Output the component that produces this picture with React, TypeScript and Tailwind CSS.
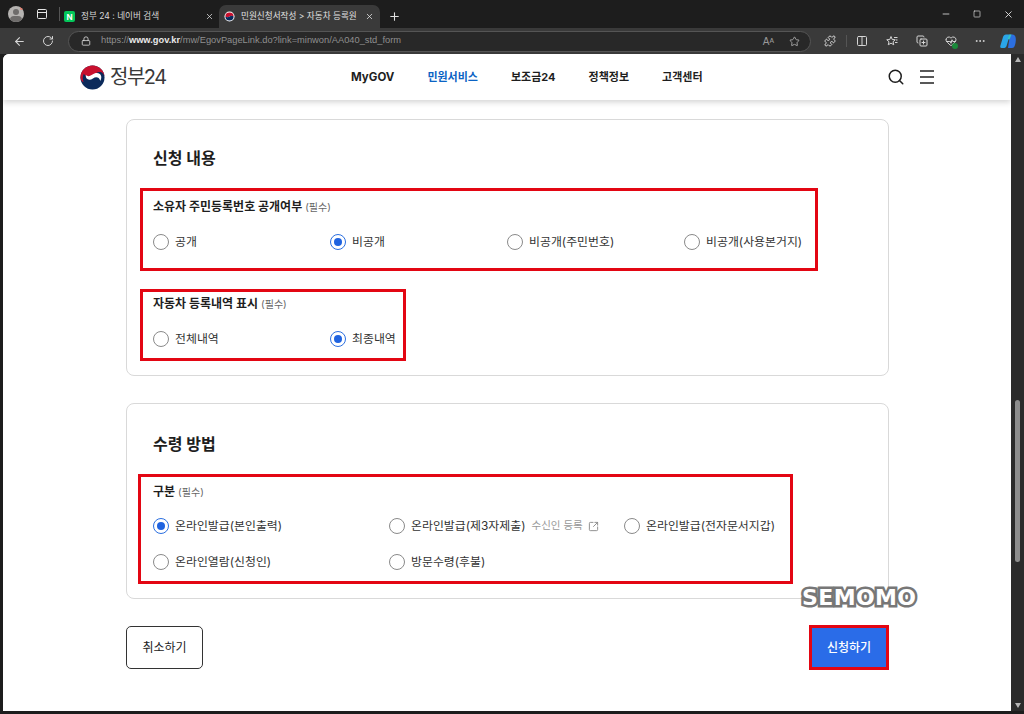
import React from "react";
import { ArrowLeft, RotateCw, Lock, Star, Search, X, Plus, Minus, Square, MoreHorizontal, Columns2, Puzzle, SquareArrowOutUpRight, HeartPulse, CopyPlus, PanelTop } from "lucide-react";

function Radio({ checked, label }: { checked?: boolean; label: string }) {
  return (
    <span className="flex items-center gap-[6px]">
      <span className={`flex h-[16px] w-[16px] shrink-0 items-center justify-center rounded-full border bg-white ${checked ? "border-[#2b6fe0]" : "border-[#8a8a8a]"}`}>
        {checked && <span className="h-[8px] w-[8px] rounded-full bg-[#1f63e0]" />}
      </span>
      <span className="whitespace-nowrap text-[11.9px] leading-[16px] text-[#333]">{label}</span>
    </span>
  );
}

function Head({ title }: { title: string }) {
  return (
    <div className="flex items-baseline gap-[3px] leading-[16px]">
      <span className="whitespace-nowrap text-[12px] font-bold text-[#1e1e1e]">{title}</span>
      <span className="text-[10px] text-[#666]">(필수)</span>
    </div>
  );
}

function Logo() {
  return (
    <div className="flex items-center gap-[5px]">
      <svg width="25" height="25" viewBox="0 0 26 26">
        <circle cx="13" cy="13" r="12.5" fill="#0b2a5b" />
        <path d="M0.5 13A12.5 12.5 0 0 1 25.5 13C25.5 8.5 22 6.500 18.500 7.500 15.500 8.500 14 11 11.500 11.500 8 12.500 5 11 4 9 2 13 3 16 4 18 1.500 17 .5 15 .5 13Z" fill="#c8102e" />
        <path d="M6 10.500C8 12.500 11 11.500 13 10 15 8.500 18 7.500 21 9.500 23 12 22 15 21 16.500 20 12.500 16.500 12 13.500 14 10 16.500 5.500 15.500 6 10.500Z" fill="#fff" />
      </svg>
      <span className="text-[20px] font-normal leading-none tracking-[-1.5px] text-[#3a3a3a]">정부24</span>
    </div>
  );
}

function TopBar() {
  return (
    <div className="shrink-0">
      <div className="flex h-[28px] items-end bg-[#1d1d1d]">
        <div className="flex h-[28px] w-[51px] items-center gap-[12px] pl-[8px]">
          <span className="relative flex h-[16px] w-[16px] shrink-0 justify-center overflow-hidden rounded-full bg-[#b5b3b1]">
            <span className="absolute top-[3px] h-[6px] w-[6px] rounded-full bg-[#6e6c6b]" />
            <span className="absolute top-[10px] h-[8px] w-[12px] rounded-full bg-[#6e6c6b]" />
            <span className="absolute right-0 top-0 h-[4px] w-[4px] rounded-full bg-[#e87c6c]" />
          </span>
          <PanelTop size={12} className="shrink-0 text-[#e5e5e5]" />
        </div>
        <div className="mb-[7px] ml-[8px] h-[14px] w-px bg-[#555]" />
        <div className="flex h-[23px] w-[159px] items-center pl-[4px] pr-[1px]">
          <span className="flex h-[11px] w-[11px] items-center justify-center rounded-[2px] bg-[#03c75a] text-[8px] font-bold leading-none text-white">N</span>
          <span className="ml-[6px] flex-1 whitespace-nowrap text-[8.6px] text-[#d8d8d8]">정부 24 : 네이버 검색</span>
          <X size={9} className="mr-[4px] text-[#e0e0e0]" />
        </div>
        <div className="flex h-[23px] w-[161px] items-center rounded-t-[7px] bg-[#3a3a3a] pl-[5px] pr-[6px]">
          <svg width="11" height="11" viewBox="0 0 12 12" className="shrink-0"><circle cx="6" cy="6" r="5.500" fill="#fff"/><path d="M1.500 6a4.500 4.500 0 0 1 9 0c-1.500-1.500-3-1-4.500 0s-3 1-4.500 0Z" fill="#c8102e"/><path d="M1.500 6c1.500 1 3 1 4.500 0s3-1.500 4.500 0a4.500 4.500 0 0 1-9 0Z" fill="#0b2a5b"/></svg>
          <span className="ml-[6px] flex-1 whitespace-nowrap text-[8.6px] text-[#e0e0e0]">민원신청서작성 &gt; 자동차 등록원</span>
          <X size={9} className="shrink-0 text-[#e8e8e8]" />
        </div>
        <div className="flex h-[23px] w-[28px] items-center justify-center">
          <Plus size={13} className="text-[#e0e0e0]" />
        </div>
        <div className="flex-1" />
        <div className="flex h-[28px] items-center gap-[22px] pr-[10px] text-[#e0e0e0]">
          <Minus size={10} />
          <Square size={8} />
          <X size={11} />
        </div>
      </div>
      <div className="flex h-[26px] items-center bg-[#3a3a3a] text-[#d5d5d5]">
        <div className="flex w-[68px] items-center gap-[16px] pl-[13px]">
          <ArrowLeft size={13} />
          <RotateCw size={12} />
        </div>
        <div className="flex h-[21px] w-[743px] items-center rounded-full border border-[#555] bg-[#282828] pl-[12px] pr-[10px]">
          <Lock size={10} className="text-[#d8d8d8]" />
          <span className="ml-[10px] flex-1 font-['Liberation_Sans',sans-serif] text-[9.3px] text-[#8f8f8f]">https://<b className="font-bold text-[#e8e8e8]">www.gov.kr</b>/mw/EgovPageLink.do?link=minwon/AA040_std_form</span>
          <span className="mr-[15px] font-['Liberation_Sans',sans-serif] text-[10px] text-[#999]">Aᴬ</span>
          <Star size={11} className="text-[#aaa]" />
        </div>
        <div className="flex flex-1 items-center pl-[13px]">
          <Puzzle size={12} />
          <span className="ml-[10px] h-[12px] w-px bg-[#555]" />
          <Columns2 size={12} className="ml-[9px]" />
          <svg width="12" height="12" viewBox="0 0 24 24" fill="none" stroke="currentColor" strokeWidth="2" className="ml-[18px]"><path d="M10 3l2.500 6 6 .5-4.500 4 1.500 6-5.500-3.200L4.500 19.500 6 13.500 1.500 9.500l6-.5Z"/><path d="M16 5h7M20 10h3M18 15h5"/></svg>
          <CopyPlus size={12} className="ml-[18px]" />
          <span className="relative ml-[17px]">
            <HeartPulse size={12} />
            <span className="absolute -bottom-[2px] -right-[1px] h-[6px] w-[6px] rounded-full bg-[#1a8a3a]" />
          </span>
          <MoreHorizontal size={12} className="ml-[17px]" />
          <svg width="16" height="16" viewBox="0 0 16 16" className="ml-[14px]"><path d="M6 1.500h4L6.500 13c-.5 1.500-1.500 2-3 2h-2C.5 15 0 14 .3 13L3 4c.5-1.500 1.500-2.500 3-2.500Z" fill="#2aa5e8"/><path d="M10 1.500h2.500c1.500 0 2.500 1 3 2.500s.5 5-.5 8-2 3-4 3H8Z" fill="#2c6fe0"/><path d="M9.500 1.500h2l-2 5-2-.5Z" fill="#35c4c4"/></svg>
        </div>
      </div>
    </div>
  );
}

function Header() {
  return (
    <header className="relative z-10 flex h-[46px] shrink-0 items-center bg-white pl-[77px] shadow-[0_2px_6px_rgba(0,0,0,0.18)]">
      <div className="w-[271px]"><Logo /></div>
      <nav className="flex items-center gap-[33px] pt-[1px] text-[11px] font-bold text-[#1e1e1e]">
        <span className="text-[11.500px]">MyGOV</span>
        <span className="text-[#0b63c4]">민원서비스</span>
        <span>보조금24</span>
        <span>정책정보</span>
        <span>고객센터</span>
      </nav>
      <div className="flex-1" />
      <div className="mr-[76px] flex items-center gap-[14px] text-[#1e1e1e]">
        <Search size={18} strokeWidth={2} />
        <svg width="16" height="14" viewBox="0 0 16 14"><path d="M1 1h14M1 7h14M1 13h14" stroke="#222" strokeWidth="1.400" /></svg>
      </div>
    </header>
  );
}

export default function App() {
  return (
    <div className="relative flex h-[714px] w-[1024px] flex-col overflow-hidden bg-[#1d1d1d] font-['Inter','Noto_Sans_CJK_KR',sans-serif]">
      <TopBar />
      <div className="flex h-[657px] shrink-0">
        <div className="ml-[3px] flex w-[1008px] flex-col overflow-hidden rounded-tl-[6px] bg-white">
          <Header />
          <main className="flex flex-col pl-[123px] pr-[122px] pt-[19px]">
            <section className="h-[257px] rounded-[8px] border border-[#d9d9d9] pl-[13px] pt-[26px]">
              <h2 className="pl-[13px] text-[16px] font-bold leading-[24px] text-[#1e1e1e]">신청 내용</h2>
              <div className="mt-[18px] h-[83px] w-[678px] border-[3px] border-[#e30613] pl-[10px] pt-[8px]">
                <Head title="소유자 주민등록번호 공개여부" />
                <div className="mt-[19px] grid grid-cols-[177px_177px_177px_1fr]">
                  <Radio label="공개" />
                  <Radio checked label="비공개" />
                  <Radio label="비공개(주민번호)" />
                  <Radio label="비공개(사용본거지)" />
                </div>
              </div>
              <div className="mt-[18px] h-[72px] w-[266px] border-[3px] border-[#e30613] pl-[10px] pt-[4px]">
                <Head title="자동차 등록내역 표시" />
                <div className="mt-[19px] grid grid-cols-[177px_1fr]">
                  <Radio label="전체내역" />
                  <Radio checked label="최종내역" />
                </div>
              </div>
            </section>
            <section className="mt-[27px] h-[196px] rounded-[8px] border border-[#d9d9d9] pl-[11px] pt-[28px]">
              <h2 className="pl-[15px] text-[16px] font-bold leading-[24px] text-[#1e1e1e]">수령 방법</h2>
              <div className="mt-[18px] h-[110px] w-[655px] border-[3px] border-[#e30613] pl-[12px] pt-[7px]">
                <Head title="구분" />
                <div className="mt-[18px] grid grid-cols-[236px_235px_1fr] gap-y-[20px]">
                  <Radio checked label="온라인발급(본인출력)" />
                  <span className="flex items-center">
                    <Radio label="온라인발급(제3자제출)" />
                    <span className="ml-[6px] whitespace-nowrap text-[10.500px] text-[#999]">수신인 등록</span>
                    <SquareArrowOutUpRight size={11} className="ml-[5px] text-[#888]" />
                  </span>
                  <Radio label="온라인발급(전자문서지갑)" />
                  <Radio label="온라인열람(신청인)" />
                  <Radio label="방문수령(후불)" />
                </div>
              </div>
            </section>
            <div className="mt-[26px] flex items-center justify-between">
              <button className="h-[43px] w-[77px] rounded-[5px] border border-[#333] bg-white text-[12px] text-[#222]">취소하기</button>
              <button className="h-[45px] w-[80px] border-[3px] border-[#e30613] bg-[#2a6ce8] text-[12px] font-medium text-white">신청하기</button>
            </div>
          </main>
        </div>
        <div className="flex w-[13px] flex-col items-center bg-[#2b2b2b] py-[3px]">
          <span className="h-0 w-0 border-x-[3px] border-b-[5px] border-x-transparent border-b-[#b5b5b5]" />
          <span className="mt-[338px] h-[162px] w-[5px] rounded-full bg-[#8d8d8d]" />
          <span className="mt-auto h-0 w-0 border-x-[3px] border-t-[5px] border-x-transparent border-t-[#b5b5b5]" />
        </div>
      </div>
      <span className="absolute left-[802px] top-[584px] font-['DejaVu_Sans',sans-serif] text-[22px] font-bold leading-[28px] tracking-[0.4px] text-white [-webkit-text-stroke:5px_#777] [paint-order:stroke_fill]">SEMOMO</span>
    </div>
  );
}
